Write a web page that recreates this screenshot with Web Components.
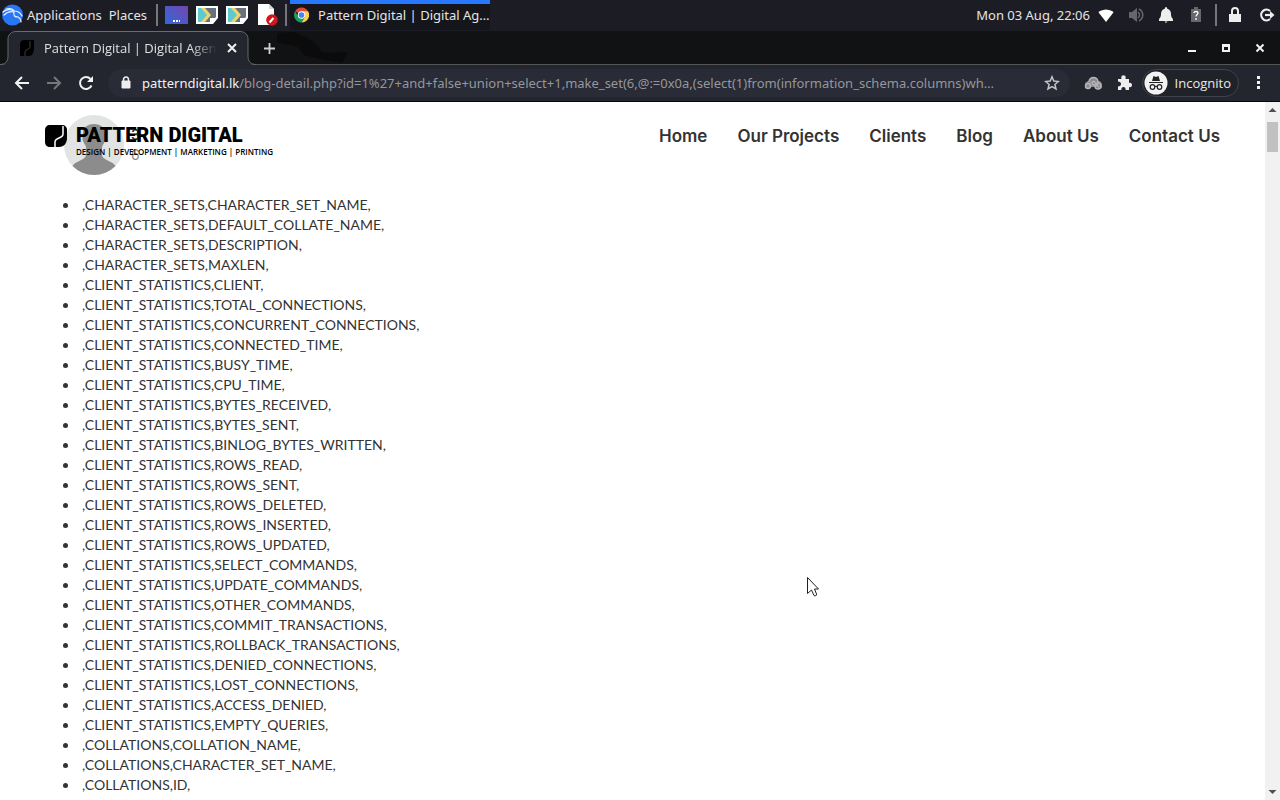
<!DOCTYPE html>
<html lang="en">
<head>
<meta charset="utf-8">
<title>Pattern Digital | Digital Agency</title>
<style>
  html, body { height: 100%; }
  body {
    margin: 0;
    overflow: hidden;
    display: flex;
    flex-direction: column;
    background: #fff;
    font-family: "Noto Sans", sans-serif;
    font-size: 13px;
  }
  page-view { flex: 1; min-height: 0; }
  mouse-pointer { position: absolute; left: 807px; top: 577px; }
</style>
</head>
<body>
<desktop-panel></desktop-panel>
<tab-strip><browser-tab>Pattern Digital | Digital Agency</browser-tab></tab-strip>
<browser-toolbar></browser-toolbar>
<page-view>
  <site-header slot="header">
    <a href="#home">Home</a>
    <a href="#projects">Our Projects</a>
    <a href="#clients">Clients</a>
    <a href="#blog">Blog</a>
    <a href="#about">About Us</a>
    <a href="#contact">Contact Us</a>
  </site-header>
  <post-author name="3" date="6"></post-author>
  <column-list></column-list>
</page-view>
<mouse-pointer></mouse-pointer>

<script>
/** Top desktop panel: launchers, open window, clock and status icons. */
class DesktopPanel extends HTMLElement {
  constructor() {
    super();
    this.attachShadow({ mode: 'open' });
  }

  connectedCallback() {
    this.shadowRoot.innerHTML = `
      <style>
        :host {
          display: flex;
          align-items: center;
          height: 30px;
          padding-bottom: 1px;
          flex: none;
          background: #1c1c24;
          color: #e4e4e4;
          font-size: 13px;
        }
        button {
          display: flex;
          align-items: center;
          border: 0;
          padding: 0;
          background: none;
          color: inherit;
          font: inherit;
          white-space: nowrap;
        }
        svg { display: block; flex: none; }
        .menus { display: flex; align-items: center; gap: 7px; padding-left: 2px; }
        .menus button { gap: 4px; }
        .sep { width: 2px; height: 22px; background: #77777b; flex: none; }
        .launchers { display: flex; gap: 8px; padding: 0 7px; }
        .menus + .sep { margin-left: 9px; }
        .window {
          box-sizing: border-box;
          height: 30px;
          width: 200px;
          margin-left: 3px;
          padding: 0 4px;
          gap: 9px;
          background: #15161b;
          box-shadow: inset 0 4px #2777ff;
        }
        .tray { display: flex; align-items: center; gap: 14px; margin-left: auto; padding-right: 5px; }
        .tray .sep { margin: 0 -3px; }
        .session { display: flex; gap: 17px; }
        time { margin-right: -6px; }
      </style>
      <div class="menus">
        <button>
          <svg width="21" height="22" viewBox="0 0 21 22">
            <circle cx="10.500" cy="11" r="10.500" fill="#2878f5"/>
            <g fill="none" stroke="#e8f2ff" stroke-width="1.200" stroke-linecap="round">
              <path d="M1 8C4 5 9 5 12 7c4 0 6 1 8 5"/>
              <path d="M2 11c3-3 7-4 10-3-1 4 1 5 4 5 2 1 3 3 3 5"/>
              <path d="M4 5c4-1 7 0 8 2"/>
            </g>
          </svg>
          Applications
        </button>
        <button>Places</button>
      </div>
      <span class="sep"></span>
      <div class="launchers">
        <button aria-label="Desktop">
          <svg width="23" height="18" viewBox="0 0 23 18">
            <defs><linearGradient id="d" x1="0" y1="1" x2="1" y2="0"><stop stop-color="#3268db"/><stop offset="1" stop-color="#7445ad"/></linearGradient></defs>
            <path fill="url(#d)" d="M0 0h23v18H0z"/>
            <path fill="#fff" d="M8 14h2v2H8zM11 14h2v2h-2zM14 14h1v2h-1z"/>
          </svg>
        </button>
        <button aria-label="Terminal">
          <svg width="22" height="18" viewBox="0 0 22 18">
            <path fill="#fff" d="M0 0h22v12l-5 6H0z"/>
            <path fill="#68727e" d="M2 2h18v9l-5 5H2z"/>
            <path fill="#5bcbd0" d="M2 2h4l6 7-6 7H2z"/>
            <path fill="#f3d36c" d="M5 2h4l6 7-6 7H5l6-7z"/>
            <path fill="#fff" d="M14 17v-5h7z"/>
          </svg>
        </button>
        <button aria-label="Root terminal">
          <svg width="22" height="18" viewBox="0 0 22 18">
            <path fill="#fff" d="M0 0h22v12l-5 6H0z"/>
            <path fill="#68727e" d="M2 2h18v9l-5 5H2z"/>
            <path fill="#5bcbd0" d="M2 2h4l6 7-6 7H2z"/>
            <path fill="#f3d36c" d="M5 2h4l6 7-6 7H5l6-7z"/>
            <path fill="#fff" d="M14 17v-5h7z"/>
          </svg>
        </button>
        <button aria-label="Text editor">
          <svg width="22" height="22" viewBox="0 0 22 22">
            <path fill="#fff" d="M2 0h11l5 5v16H2z"/>
            <path fill="#d8d8d8" d="M13 0v5h5z"/>
            <circle cx="16" cy="16" r="5.800" fill="#d4161c"/>
            <path d="M13.500 18.500l4-4.500" stroke="#fff" stroke-width="2"/>
          </svg>
        </button>
      </div>
      <span class="sep"></span>
      <button class="window">
        <svg width="15" height="16" viewBox="0 0 16 16">
          <path fill="#dd4b3e" d="M8 8L1.100 4A8 8 0 0 1 15 4z"/>
          <path fill="#fdd24a" d="M8 8V4h7A8 8 0 0 1 8 16l4-7z"/>
          <path fill="#1b9e5a" d="M8 16A8 8 0 0 1 1.100 4l4 6 6 1z"/>
          <circle cx="8" cy="8" r="4" fill="#fff"/>
          <circle cx="8" cy="8" r="3" fill="#4285f4"/>
        </svg>
        Pattern Digital | Digital Ag…
      </button>
      <div class="tray">
        <time datetime="2020-08-03T22:06">Mon 03 Aug, 22:06</time>
        <svg width="16" height="13" viewBox="0 0 16 13"><path fill="#fff" d="M8 13L1 4C0 3 1 2.500 2 2c4-2 8-2 12 0 1 .5 2 1 1 2z"/></svg>
        <svg width="16" height="16" viewBox="0 0 16 16" fill="none" stroke="#66666b"><path fill="#66666b" stroke="none" d="M1 5h3l5-4v14l-5-4H1z"/><path stroke-width="1.500" d="M10 5c2 2 2 4 0 6M11 2c5 3 5 9 0 12"/></svg>
        <svg width="16" height="16" viewBox="0 0 16 16" fill="#eee"><path d="M8 0c1 0 1 1 1 1.500 3 1 4 3 4 5.500 0 4 2 4 2 6v1H1v-1c0-2 2-2 2-6 0-2.500 1-4.500 4-5.500C7 1 7 0 8 0zM6.500 14.500h3L8 16z"/></svg>
        <svg width="16" height="16" viewBox="0 0 16 16"><path fill="#66666b" d="M3 2h3V0h4v2h3v13H3z"/><path d="M6 6c0-2 4-2 4 0 0 1.500-2 1.500-2 3.500M8 11v2" fill="none" stroke="#fff" stroke-width="1.300"/></svg>
        <span class="sep"></span>
        <div class="session">
          <svg width="14" height="16" viewBox="0 0 14 16"><path fill="#eee" d="M1 7h12v8H1z"/><path d="M4 8V4c0-4 6-4 6 0v4" fill="none" stroke="#eee" stroke-width="2"/></svg>
          <svg width="16" height="16" viewBox="0 0 16 16" fill="none" stroke="#eee" stroke-width="2.200"><path d="M11 4a5.300 5.300 0 1 0 0 8"/><path d="M6 8h6"/><path fill="#eee" stroke="none" d="M11 4l4.500 4-4.500 4z"/></svg>
        </div>
      </div>
    `;
  }
}
customElements.define('desktop-panel', DesktopPanel);

/** Row of tabs with the window buttons on the right. */
class TabStrip extends HTMLElement {
  constructor() {
    super();
    this.attachShadow({ mode: 'open' });
  }

  connectedCallback() {
    this.shadowRoot.innerHTML = `
      <style>
        :host {
          display: flex;
          align-items: center;
          height: 34px;
          flex: none;
          background: #111213;
          box-shadow: inset 0 -1px #545454;
        }
        button { display: flex; border: 0; padding: 0; background: none; }
        .new { margin-left: 7px; }
        .dragon { margin-left: 1px; align-self: flex-start; }
        .controls { display: flex; gap: 22px; margin-left: auto; padding-right: 14px; }
      </style>
      <slot></slot>
      <button class="new" aria-label="New tab">
        <svg width="13" height="13" viewBox="0 0 13 13"><path d="M6.500 1v11M1 6.500h11" stroke="#cfcfcf" stroke-width="1.800"/></svg>
      </button>
      <svg class="dragon" width="76" height="33" viewBox="0 0 76 33"><path fill="#0b0b0c" d="M0 2l18-1 18 9 9 10-12-6 14 8 24-1-6 11-22-4-16-4-6-8-21-5z"/></svg>
      <div class="controls">
        <button aria-label="Minimize"><svg width="12" height="12" viewBox="0 0 12 12"><path fill="#f2f2f2" d="M2 8h8v2H2z"/></svg></button>
        <button aria-label="Maximize"><svg width="12" height="12" viewBox="0 0 12 12"><path fill="#f2f2f2" fill-rule="evenodd" d="M2 2h8v8H2zM4 5v3h4V5z"/></svg></button>
        <button aria-label="Close"><svg width="12" height="12" viewBox="0 0 12 12"><path d="M2.500 2.500l7 7M9.500 2.500l-7 7" stroke="#f2f2f2" stroke-width="2"/></svg></button>
      </div>
    `;
  }
}
customElements.define('tab-strip', TabStrip);

/** The active tab. The outline is drawn, the title is slotted. */
class BrowserTab extends HTMLElement {
  constructor() {
    super();
    this.attachShadow({ mode: 'open' });
  }

  connectedCallback() {
    this.shadowRoot.innerHTML = `
      <style>
        :host {
          position: relative;
          display: flex;
          align-items: center;
          gap: 10px;
          box-sizing: border-box;
          width: 256px;
          height: 34px;
          padding: 0 19px 0 20px;
          color: #e0e0e0;
          font: 13px "Open Sans", sans-serif;
        }
        .shape { position: absolute; inset: 0; }
        .title {
          position: relative;
          flex: 1;
          overflow: hidden;
          white-space: nowrap;
          -webkit-mask-image: linear-gradient(90deg, #000 85%, transparent);
          mask-image: linear-gradient(90deg, #000 85%, transparent);
        }
        .icon { position: relative; flex: none; }
        button { position: relative; display: flex; border: 0; padding: 0; background: none; }
      </style>
      <svg class="shape" width="256" height="34" viewBox="0 0 256 34">
        <path fill="#23252f" stroke="#6b6b6b" d="M0 33.500c5 0 8-3 8-8V8c0-4 3-7.500 8-7.500h224c5 0 8 3.500 8 7.500v17.500c0 5 3 8 8 8"/>
        <path d="M5 33.500h246" stroke="#23252f" stroke-width="1"/>
      </svg>
      <svg class="icon" width="14" height="16" viewBox="0 0 14 16">
        <path d="M4 0h10v8c0 5-2 8-5 8H0V4c0-2 2-4 4-4z"/>
        <path d="M10 1v6c0 3-5 2-5 5v4" fill="none" stroke="#3c3d44"/>
      </svg>
      <span class="title"><slot></slot></span>
      <button aria-label="Close tab"><svg width="10" height="10" viewBox="0 0 10 10"><path d="M1 1l8 8M9 1L1 9" stroke="#f0f0f0" stroke-width="2"/></svg></button>
    `;
  }
}
customElements.define('browser-tab', BrowserTab);

/** Navigation buttons, address field, extensions. */
class BrowserToolbar extends HTMLElement {
  constructor() {
    super();
    this.attachShadow({ mode: 'open' });
  }

  connectedCallback() {
    this.shadowRoot.innerHTML = `
      <style>
        :host {
          display: flex;
          align-items: center;
          box-sizing: border-box;
          height: 37px;
          flex: none;
          padding: 0 17px 0 14px;
          background: #23252f;
          border-bottom: 1px solid #08080a;
          color: #e8e8e8;
          font-size: 13px;
        }
        button { display: flex; align-items: center; border: 0; padding: 0; background: none; color: inherit; font: inherit; flex: none; }
        svg { display: block; flex: none; }
        .nav { display: flex; gap: 16px; }
        form {
          flex: 1;
          display: flex;
          align-items: center;
          box-sizing: border-box;
          height: 28px;
          min-width: 0;
          margin-left: 14px;
          padding: 0 10px 0 12px;
          border-radius: 14px;
          background: #292b36;
        }
        label { margin-left: 10px; color: #f2f2f2; }
        input {
          flex: 1;
          min-width: 0;
          border: 0;
          padding: 0;
          outline: 0;
          background: none;
          color: #96979c;
          font: inherit;
          text-overflow: ellipsis;
        }
        .star { margin-left: 12px; }
        .actions { display: flex; align-items: center; gap: 14px; margin-left: 14px; }
        .incognito {
          box-sizing: border-box;
          height: 28px;
          gap: 7px;
          padding: 0 7px 0 1px;
          margin-left: -4px;
          border: 1px solid #40424a;
          border-radius: 14px;
          background: #202229;
          font: 13px "Open Sans", sans-serif;
        }
      </style>
      <div class="nav">
        <button aria-label="Back"><svg width="16" height="16" viewBox="0 0 16 16" fill="none" stroke="#f2f2f2" stroke-width="2"><path d="M15 8H2M8 2L2 8l6 6"/></svg></button>
        <button aria-label="Forward"><svg width="16" height="16" viewBox="0 0 16 16" fill="none" stroke="#76777c" stroke-width="2"><path d="M1 8h13M8 2l6 6-6 6"/></svg></button>
        <button aria-label="Reload"><svg width="16" height="16" viewBox="0 0 16 16" fill="none" stroke="#f2f2f2" stroke-width="2"><path d="M13.500 10.500A6 6 0 1 1 12.500 4"/><path d="M15 1v6H9z" fill="#f2f2f2" stroke="none"/></svg></button>
      </div>
      <form>
        <svg width="12" height="14" viewBox="0 0 12 14"><path fill="#eee" d="M2 5h8v7H2z" stroke="#eee" stroke-linejoin="round"/><path d="M3.500 6V4c0-4 5-4 5 0v2" fill="none" stroke="#eee" stroke-width="1.500"/></svg>
        <label for="url">patterndigital.lk</label>
        <input id="url" value="/blog-detail.php?id=1%27+and+false+union+select+1,make_set(6,@:=0x0a,(select(1)from(information_schema.columns)wh…" spellcheck="false">
        <button type="button" class="star" aria-label="Bookmark"><svg width="16" height="16" viewBox="0 0 16 16" fill="none" stroke="#c4c5c8" stroke-width="1.500"><path d="M8 1.800l1.800 4.300 4.600.4-3.500 3 1.100 4.500-4-2.400L4 14l1.100-4.500-3.500-3 4.600-.4z"/></svg></button>
      </form>
      <div class="actions">
        <button aria-label="Proxy extension">
          <svg width="18" height="14" viewBox="0 0 18 14" fill="none" stroke="#b4b4b6" stroke-width="1.500">
            <path fill="#8b8b8e" stroke="none" d="M1 9c0-3 2-4 4-4 1-5 8-5 9 0 3 0 4 2 4 5 0 4-5 4-6 1H6c-1 2-5 2-5-2z"/>
            <circle cx="4" cy="10" r="2.500"/><path d="M5 6c0-6 9-6 9 0 0 4-6 4-6 1 0-2 3-2 3 0"/><circle cx="14" cy="10" r="3"/><path d="M12 9l3 2"/>
          </svg>
        </button>
        <button aria-label="Extensions">
          <svg width="16" height="16" viewBox="0 0 16 16"><path fill="#eee" d="M2 4h3.500c-1.500-5 5.500-5 4 0H13v4c4-1.500 4 5.500 0 4v3H9.500c1-4-5-4-4 0H2v-3.500c4 0 4-5 0-5z"/></svg>
        </button>
        <button class="incognito">
          <svg width="24" height="24" viewBox="0 0 24 24">
            <circle cx="12" cy="12" r="11.500" fill="#f2f2f2"/>
            <path fill="#222" d="M8 10l1.500-5L12 6l2.500-1L16 10zM5 11h14v1H5z"/>
            <g fill="none" stroke="#222" stroke-width="1.200"><circle cx="8.500" cy="16" r="2.300"/><circle cx="15.500" cy="16" r="2.300"/><path d="M11 16c0-1 2-1 2 0"/></g>
          </svg>
          Incognito
        </button>
        <button aria-label="Menu"><svg width="10" height="14" viewBox="0 0 10 14" fill="#f2f2f2"><path d="M4 0h3v3H4zM4 5h3v3H4zM4 10h3v3H4z"/></svg></button>
      </div>
    `;
  }
}
customElements.define('browser-toolbar', BrowserToolbar);

/** Page area: content on the left, scroll bar on the right. */
class PageView extends HTMLElement {
  constructor() {
    super();
    this.attachShadow({ mode: 'open' });
  }

  connectedCallback() {
    this.shadowRoot.innerHTML = `
      <style>
        :host { display: flex; color: #333; }
        main { position: relative; flex: 1; min-width: 0; overflow: hidden; background: #fff; }
        .over { position: absolute; top: 0; left: 0; right: 0; }
        .bar {
          width: 15px;
          display: flex;
          flex-direction: column;
          align-items: center;
          justify-content: space-between;
          background: #f1f1f1;
        }
        .bar svg { display: block; }
        .track { flex: 1; padding-top: 4px; }
        .thumb { width: 11px; height: 30px; background: #c1c1c1; }
      </style>
      <main>
        <slot></slot>
        <div class="over"><slot name="header"></slot></div>
      </main>
      <div class="bar">
        <svg width="15" height="16" viewBox="0 0 15 16"><path fill="#505050" d="M7.500 6l4 4h-8z"/></svg>
        <div class="track"><div class="thumb"></div></div>
        <svg width="15" height="16" viewBox="0 0 15 16"><path fill="#505050" d="M7.500 10l4-4h-8z"/></svg>
      </div>
    `;
  }
}
customElements.define('page-view', PageView);

class SiteHeader extends HTMLElement {
  constructor() {
    super();
    this.attachShadow({ mode: 'open' });
  }

  connectedCallback() {
    this.shadowRoot.innerHTML = `
      <style>
        :host {
          display: flex;
          align-items: flex-start;
          justify-content: space-between;
          padding: 22px 45px 0;
        }
        .logo { display: flex; gap: 9px; color: #000; text-decoration: none; }
        .logo svg { margin-top: 1px; }
        .logo span { display: block; white-space: nowrap; }
        .word { font: 900 20px/22px Roboto, sans-serif; }
        .tag { font: 600 8px/12px "Open Sans", sans-serif; }
        nav { display: flex; gap: 30px; }
        ::slotted(a) {
          color: #333;
          font: 600 17px/24px Inter, sans-serif;
          text-decoration: none;
          white-space: nowrap;
        }
      </style>
      <a class="logo" href="#home" aria-label="Pattern Digital">
        <svg width="22" height="22" viewBox="0 0 22 22">
          <path d="M5 0h12c3 0 5 2 5 5v8c0 5-3 9-8 9H5c-3 0-5-2-5-5V5c0-3 2-5 5-5z"/>
          <path d="M18 1v8c0 5-8 3-8 8v5" fill="none" stroke="#fff" stroke-width="1.500"/>
        </svg>
        <span>
          <span class="word">PATTERN DIGITAL</span>
          <span class="tag">DESIGN | DEVELOPMENT | MARKETING | PRINTING</span>
        </span>
      </a>
      <nav><slot></slot></nav>
    `;
  }
}
customElements.define('site-header', SiteHeader);

/** <post-author name date> — avatar with two lines of text beside it. */
class PostAuthor extends HTMLElement {
  constructor() {
    super();
    this.attachShadow({ mode: 'open' });
  }

  connectedCallback() {
    this.shadowRoot.innerHTML = `
      <style>
        :host {
          display: flex;
          gap: 7px;
          padding: 13px 0 20px 64px;
          font: 14px/20px Inter, sans-serif;
        }
        svg { display: block; }
        p { margin: 0; color: #8a8a8a; }
        .text { padding-top: 10px; }
        .name { color: #333; font-weight: 600; }
      </style>
      <svg width="60" height="60" viewBox="0 0 60 60">
        <defs><clipPath id="c"><circle cx="30" cy="30" r="30"/></clipPath></defs>
        <g clip-path="url(#c)">
          <path fill="#e2e4e3" d="M0 0h60v60H0z"/>
          <path fill="#8c8c8c" d="M19 18c0-12 22-12 22 0 0 3 1 4 0 8-1 3-3 4-3 7v7c0 5 12 6 14 12v8H8v-8c2-6 14-7 14-12v-7c0-3-2-4-3-7-1-4 0-5 0-8z"/>
        </g>
      </svg>
      <div class="text">
        <p class="name">${this.getAttribute('name')}</p>
        <p>${this.getAttribute('date')}</p>
      </div>
    `;
  }
}
customElements.define('post-author', PostAuthor);

class ColumnList extends HTMLElement {
  constructor() {
    super();
    this.attachShadow({ mode: 'open' });
  }

  connectedCallback() {
    // table name → its columns, printed as ",TABLE,COLUMN,"
    const tables = {
      CHARACTER_SETS: ['CHARACTER_SET_NAME', 'DEFAULT_COLLATE_NAME', 'DESCRIPTION', 'MAXLEN'],
      CLIENT_STATISTICS: [
        'CLIENT', 'TOTAL_CONNECTIONS', 'CONCURRENT_CONNECTIONS', 'CONNECTED_TIME',
        'BUSY_TIME', 'CPU_TIME', 'BYTES_RECEIVED', 'BYTES_SENT',
        'BINLOG_BYTES_WRITTEN', 'ROWS_READ', 'ROWS_SENT', 'ROWS_DELETED',
        'ROWS_INSERTED', 'ROWS_UPDATED', 'SELECT_COMMANDS', 'UPDATE_COMMANDS',
        'OTHER_COMMANDS', 'COMMIT_TRANSACTIONS', 'ROLLBACK_TRANSACTIONS',
        'DENIED_CONNECTIONS', 'LOST_CONNECTIONS', 'ACCESS_DENIED', 'EMPTY_QUERIES',
      ],
      COLLATIONS: ['COLLATION_NAME', 'CHARACTER_SET_NAME', 'ID'],
    };
    const items = Object.entries(tables).flatMap(([table, columns]) =>
      columns.map((column) => `<li>,${table},${column},</li>`)
    );

    this.shadowRoot.innerHTML = `
      <style>
        :host { display: block; }
        ul { margin: 0; padding: 0 0 0 79px; }
        li { padding-left: 3px; font: 14px/20px Lato, sans-serif; color: #333; }
      </style>
      <ul>${items.join('')}</ul>
    `;
  }
}
customElements.define('column-list', ColumnList);

class MousePointer extends HTMLElement {
  constructor() {
    super();
    this.attachShadow({ mode: 'open' });
  }

  connectedCallback() {
    this.shadowRoot.innerHTML = `
      <style>:host { display: block; pointer-events: none; }</style>
      <svg width="13" height="20" viewBox="0 0 13 20"><path fill="#fff" stroke="#20202a" d="M.5.5v16l4-3.500 2.500 5.500c1 1 3 0 2.500-1.500L7.500 12h4z"/></svg>
    `;
  }
}
customElements.define('mouse-pointer', MousePointer);
</script>
</body>
</html>
